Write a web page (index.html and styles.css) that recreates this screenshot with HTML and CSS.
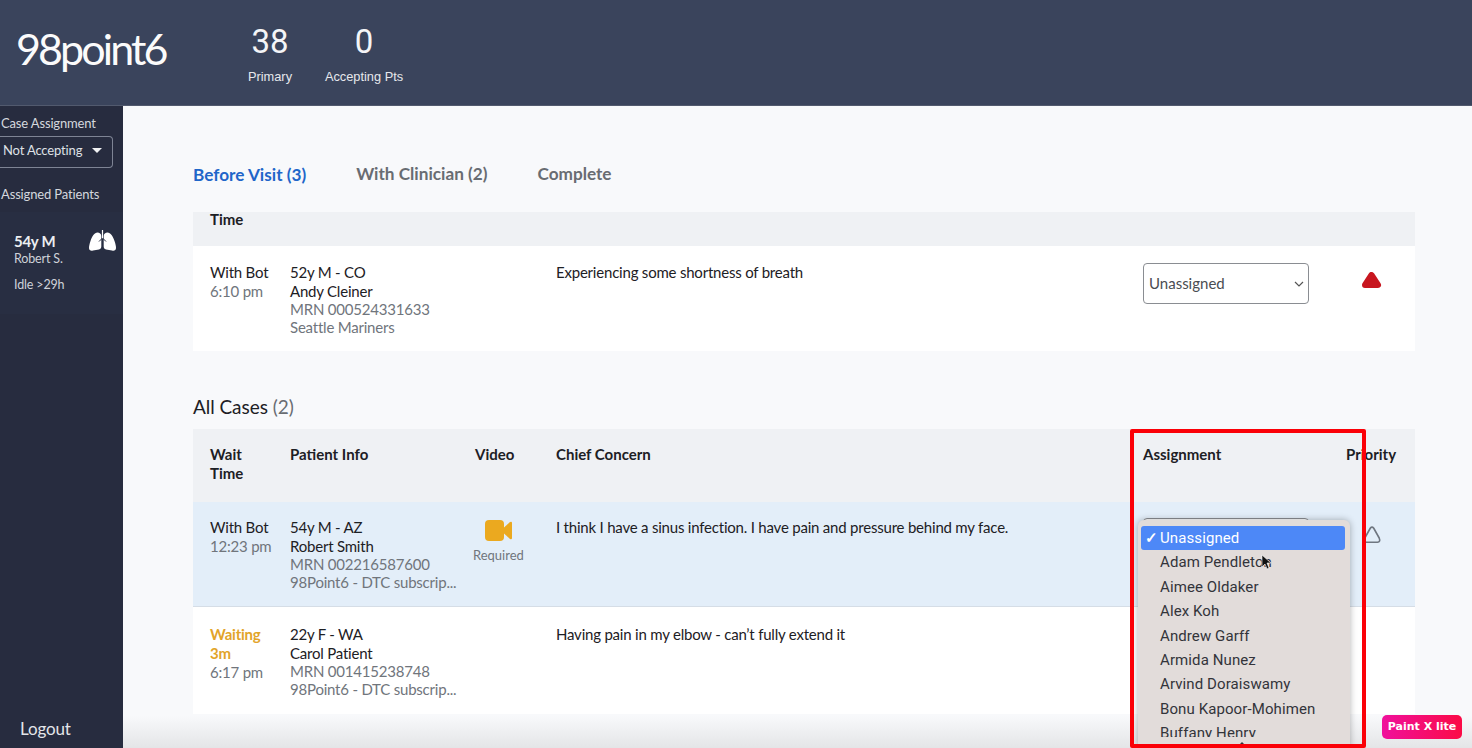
FILE: index.html
```html
<!DOCTYPE html>
<html lang="en">
<head>
<meta charset="utf-8">
<title>98point6</title>
<link rel="stylesheet" href="styles.css">
</head>
<body>
<header class="topbar">
  <div class="logo">98point6</div>
  <div class="stat stat-primary"><div class="stat-num">38</div><div class="stat-label">Primary</div></div>
  <div class="stat stat-accepting"><div class="stat-num">0</div><div class="stat-label">Accepting Pts</div></div>
</header>
<div class="layout">
  <aside class="sidebar">
    <div class="side-label">Case Assignment</div>
    <div class="side-select"><span>Not Accepting</span><i class="caret"></i></div>
    <div class="side-label side-assigned">Assigned Patients</div>
    <div class="side-patient">
      <div class="side-patient-info">
        <div class="side-age">54y M</div>
        <div class="side-name">Robert S.</div>
        <div class="side-idle">Idle &gt;29h</div>
      </div>
      <svg class="lungs" viewBox="0 0 27 21" width="27" height="21" aria-hidden="true">
        <path fill="#fff" d="M8.500 2.500C5.500 2.500 3 6.500 1.500 11 .5 14 0 16 0 18c0 2.500 2 3 4 2.500l6-1c1.500-.5 2.300-1.500 2.300-3V6c0-2-1.800-3.500-3.800-3.500z"/>
        <path fill="#fff" d="M18.500 2.500c3 0 5.500 4 7 8.500 1 3 1.500 5 1.500 7 0 2.500-2 3-4 2.500l-6-1c-1.500-.5-2.300-1.500-2.300-3V6c0-2 1.800-3.500 3.800-3.500z"/>
        <path fill="none" stroke="#fff" stroke-width="1.200" d="M13.500 0v9"/>
        <path fill="none" stroke="#282e42" stroke-width="1" d="M13.500 8l-3.500 3.500M13.500 8l3.500 3.500"/>
      </svg>
    </div>
    <div class="logout">Logout</div>
  </aside>
  <main class="content">
    <nav class="tabs">
      <span class="tab tab-active">Before Visit (3)</span>
      <span class="tab">With Clinician (2)</span>
      <span class="tab">Complete</span>
    </nav>
    <div class="table-head table-head-cut"><b>Time</b></div>
    <div class="row row-first">
      <div class="cell-wait"><div class="strong">With Bot</div><div class="muted">6:10 pm</div></div>
      <div class="cell-info">
        <div class="strong">52y M - CO</div><div class="strong">Andy Cleiner</div>
        <div class="muted tight">MRN 000524331633</div><div class="muted tight">Seattle Mariners</div>
      </div>
      <div></div>
      <div class="strong">Experiencing some shortness of breath</div>
      <div class="fake-select"><span>Unassigned</span>
        <svg viewBox="0 0 10 6" width="10" height="6" aria-hidden="true"><path d="M1 1l4 4 4-4" fill="none" stroke="#555" stroke-width="1.200"/></svg>
      </div>
      <div class="cell-priority">
        <svg viewBox="0 0 20 18" width="20" height="18" aria-hidden="true"><path d="M9.500 3 L16 13 H3 Z" fill="#c8161f" stroke="#c8161f" stroke-width="6" stroke-linejoin="round"/></svg>
      </div>
    </div>

    <h2 class="section-title">All Cases <span>(2)</span></h2>
    <div class="table-head table-head-grid">
      <b>Wait<br>Time</b><b>Patient Info</b><b>Video</b><b>Chief Concern</b><b>Assignment</b><b>Priority</b>
    </div>
    <div class="row row-selected">
      <div class="cell-wait"><div class="strong">With Bot</div><div class="muted">12:23 pm</div></div>
      <div class="cell-info">
        <div class="strong">54y M - AZ</div><div class="strong">Robert Smith</div>
        <div class="muted tight">MRN 002216587600</div><div class="muted tight">98Point6 - DTC subscrip...</div>
      </div>
      <div class="cell-video">
        <svg viewBox="0 0 27 21" width="27" height="21" aria-hidden="true">
          <rect x="0" y="0" width="19" height="21" rx="4" fill="#eba91f"/>
          <path d="M19 7.500 L25 2 Q27 1 27 3 V18 Q27 20 25 19 L19 13.500 Z" fill="#eba91f"/>
        </svg>
        <div class="video-label">Required</div>
      </div>
      <div class="strong">I think I have a sinus infection. I have pain and pressure behind my face.</div>
      <div class="fake-select"><span>Unassigned</span></div>
      <div class="cell-priority cell-priority-low">
        <svg viewBox="0 0 20 18" width="20" height="18" aria-hidden="true"><path d="M8.400 2 Q10 .2 11.600 2 L17.200 12 Q18.800 16 15.500 16.200 H4.500 Q1.200 16 2.800 12 Z" fill="none" stroke="#6f7680" stroke-width="1.600" stroke-linejoin="round"/></svg>
      </div>
    </div>
    <div class="row row-last">
      <div class="cell-wait"><div class="waiting">Waiting<br>3m</div><div class="muted">6:17 pm</div></div>
      <div class="cell-info">
        <div class="strong">22y F - WA</div><div class="strong">Carol Patient</div>
        <div class="muted tight">MRN 001415238748</div><div class="muted tight">98Point6 - DTC subscrip...</div>
      </div>
      <div></div>
      <div class="strong">Having pain in my elbow - can’t fully extend it</div>
    </div>
  </main>
</div>

<div class="dropdown">
  <div class="opt-list">
    <div class="opt opt-selected"><span class="check">✓</span><span>Unassigned</span></div>
    <div class="opt">Adam Pendleton</div>
    <div class="opt">Aimee Oldaker</div>
    <div class="opt">Alex Koh</div>
    <div class="opt">Andrew Garff</div>
    <div class="opt">Armida Nunez</div>
    <div class="opt">Arvind Doraiswamy</div>
    <div class="opt">Bonu Kapoor-Mohimen</div>
    <div class="opt">Buffany Henry</div>
  </div>
  <i class="scroll-arrow"></i>
</div>
<svg class="cursor" viewBox="0 0 10 16" width="10" height="16" aria-hidden="true"><path d="M1 0v12l3-3 2 5 2-1-2-5h4z" fill="#111" stroke="#fff" stroke-width=".6"/></svg>
<div class="highlight"></div>
<div class="paint-badge">Paint X lite</div>
</body>
</html>
```
FILE: styles.css
```css
* { box-sizing: border-box; }
html, body { margin: 0; padding: 0; height: 748px; overflow: hidden; }
body {
  font-family: Lato, "Liberation Sans", sans-serif;
  font-size: 15px;
  color: #1d2024;
  background: #f8f9fb;
  display: flex;
  flex-direction: column;
  position: relative;
}
.topbar {
  height: 106px;
  flex: none;
  background: #3a445c;
  color: #fff;
  display: flex;
  border-bottom: 1px solid #525a6e;
}
.logo {
  width: 236px;
  padding: 22px 0 0 16px;
  font-size: 43px;
  line-height: 54px;
  letter-spacing: -2.900px;
  font-weight: 400;
  color: #fbfbfb;
}
.stat { text-align: center; padding-top: 21px; font-family: "Liberation Sans", Arial, sans-serif; }
.stat-primary { width: 68px; margin-right: 16px; }
.stat-accepting { width: 88px; }
.stat-num { font-size: 33px; line-height: 42px; font-family: Roboto, sans-serif; font-weight: 400; color: #f4f5f7; }
.stat-label { font-size: 12.800px; line-height: 16px; margin-top: 6px; color: #e6e8ec; white-space: nowrap; }
.layout { flex: 1; display: flex; min-height: 0; }
.sidebar {
  width: 123px;
  flex: none;
  background: #272c3f;
  color: #d9dbe0;
  display: flex;
  flex-direction: column;
  font-size: 13px;
  letter-spacing: -.15px;
}
.side-label { padding: 9px 0 0 1px; line-height: 17px; color: #d5d8de; white-space: nowrap; }
.side-assigned { padding-top: 18px; }
.side-select {
  margin-top: 4px;
  width: 113px;
  height: 32px;
  border: 1px solid #7e8494;
  border-left: 0;
  border-radius: 0 4px 4px 0;
  display: flex;
  align-items: center;
  justify-content: space-between;
  padding: 0 10px 4px 3px;
  color: #dfe1e6;
}
.caret { width: 0; height: 0; border-left: 5px solid transparent; border-right: 5px solid transparent; border-top: 5px solid #f1f2f4; }
.side-patient {
  margin-top: 9px;
  height: 102px;
  background: #282e42;
  display: flex;
  justify-content: space-between;
  padding: 19px 7px 0 14px;
}
.side-age { font-size: 15px; line-height: 20px; color: #eceef1; font-weight: 700; letter-spacing: -.3px; }
.side-name { font-size: 12.500px; line-height: 15px; color: #cfd2d9; }
.side-idle { font-size: 12.500px; line-height: 16px; margin-top: 11px; color: #cfd2d9; }
.lungs { margin-top: -1px; }
.logout { margin-top: auto; padding: 0 0 8px 20px; font-size: 17px; line-height: 22px; color: #e3e5e9; }
.content {
  flex: 1;
  min-width: 0;
  padding: 0 57px 0 70px;
  background: linear-gradient(#f8f9fb 95%, #e4e5e7 100%);
}
.tabs { height: 106px; display: flex; padding-top: 56px; font-size: 17.200px; font-weight: 700; color: #686c72; }
.tab { margin-right: 50px; line-height: 24px; }
.tab-active { color: #1f66c9; padding-top: 1px; }
.table-head { background: #eff1f4; font-size: 15px; }
.table-head b { font-weight: 700; line-height: 19px; }
.table-head-cut { height: 34px; padding-left: 17px; }
.table-head-cut b { display: block; line-height: 15px; }
.row, .table-head-grid {
  display: grid;
  grid-template-columns: 80px 185px 81px 587px 203px 1fr;
  padding: 0 17px;
}
.row { height: 105px; padding-top: 17px; line-height: 19px; background: #fff; letter-spacing: -.21px; }
.strong { color: #1d2024; line-height: 19px; }
.muted { color: #70757c; line-height: 19px; }
.tight { line-height: 17.500px; }
.waiting { color: #e2a429; font-weight: 700; line-height: 19px; }
.fake-select {
  width: 166px;
  height: 41px;
  border: 1.500px solid #8a8d92;
  border-radius: 4px;
  background: #fff;
  display: flex;
  align-items: center;
  justify-content: space-between;
  padding: 0 4px 0 5px;
  color: #4a4d52;
  font-size: 15px;
  letter-spacing: 0;
}
.cell-priority { padding-left: 16px; padding-top: 9px; }
.cell-priority-low { padding-top: 8px; padding-left: 16px; }
.section-title { height: 78px; margin: 0; padding-top: 44px; font-size: 19px; line-height: 24px; font-weight: 400; color: #1d2024; letter-spacing: -.05px; }
.section-title span { color: #686c72; }
.table-head-grid { height: 73px; padding-top: 16px; }
.row-selected { background: #e3eef9; border-bottom: 1px solid #d5dde6; padding-top: 16px; }
.row-last { height: 107px; padding-top: 18px; }
.cell-video { margin-left: -2px; width: 50px; text-align: center; padding-top: 2px; }
.cell-video svg { display: block; margin: 0 auto 6px; }
.video-label { font-size: 13px; line-height: 16px; color: #70757c; white-space: nowrap; letter-spacing: 0; }
.dropdown {
  position: absolute;
  left: 1138px;
  top: 520px;
  width: 212px;
  height: 228px;
  overflow: hidden;
  background: #e2dcda;
  border-radius: 6px 6px 0 0;
  box-shadow: 0 0 7px rgba(0, 0, 0, .3);
  padding: 6px 3px 0;
  font-family: Roboto, "Liberation Sans", sans-serif;
  font-size: 15px;
  letter-spacing: .1px;
  color: #33343a;
}
.opt-list { height: 211px; overflow: hidden; }
.opt { height: 24.400px; line-height: 25px; padding-left: 19px; white-space: nowrap; }
.opt-selected { background: #4d88f7; color: #fff; border-radius: 3px; margin-right: 2px; padding-left: 4px; display: flex; }
.check { width: 15px; flex: none; font-size: 15px; font-weight: 700; }
.scroll-arrow {
  position: absolute;
  left: 98px;
  top: 222px;
  width: 0;
  height: 0;
  border-left: 6px solid transparent;
  border-right: 6px solid transparent;
  border-bottom: 6px solid #33343a;
}
.cursor { position: absolute; left: 1261px; top: 555px; }
.highlight {
  position: absolute;
  left: 1130px;
  top: 429px;
  width: 236px;
  height: 319px;
  border: 4.500px solid #fb0007;
  border-radius: 2px;
  pointer-events: none;
}
.paint-badge {
  position: absolute;
  left: 1382px;
  top: 715px;
  width: 80px;
  height: 24px;
  border-radius: 5px;
  background: linear-gradient(90deg, #f0109c, #fb0b46);
  color: #fff;
  font: 700 11px/24px "DejaVu Sans", sans-serif;
  text-align: center;
  white-space: nowrap;
}
```
